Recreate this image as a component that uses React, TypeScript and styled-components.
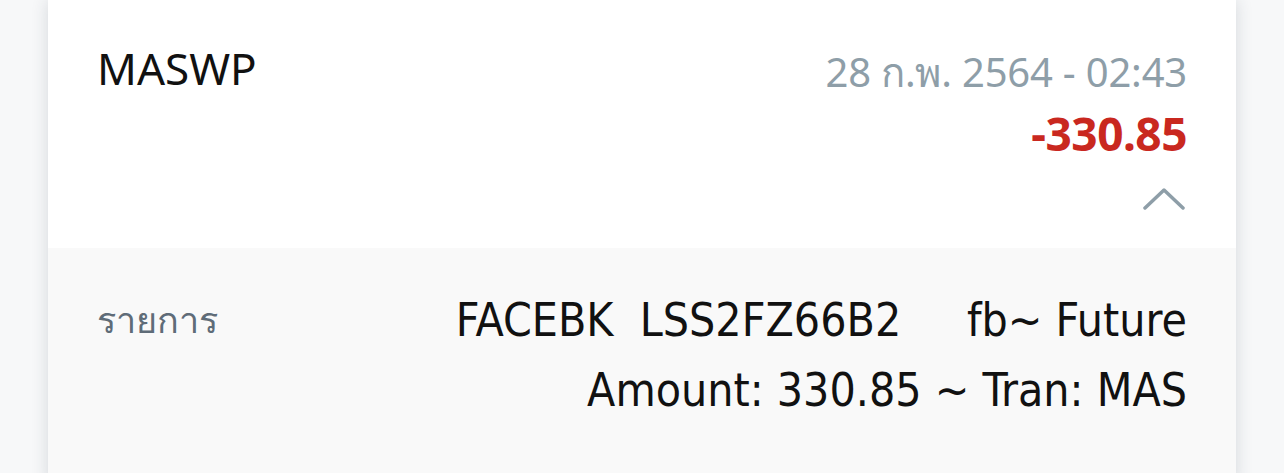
import styled, { createGlobalStyle } from "styled-components";
import React from "react";

const Global = createGlobalStyle`
  html, body {
    margin: 0;
    padding: 0;
    background: #f7f8f9;
    font-family: "Noto Sans", "DejaVu Sans", sans-serif;
  }
`;

const Page = styled.div`
  height: 473px;
  overflow: hidden;
  padding: 0 48px;
`;

const Card = styled.div`
  background: #ffffff;
  box-shadow: 0 0 16px rgba(40, 50, 70, 0.16);
  min-height: 473px;
`;

const Header = styled.div`
  display: flex;
  justify-content: space-between;
  align-items: flex-start;
  height: 248px;
  box-sizing: border-box;
  padding: 40px 49px 0 49px;
  background: #ffffff;
`;

const Title = styled.div`
  font-size: 44px;
  color: #111111;
  line-height: 56px;
`;

const RightCol = styled.div`
  display: flex;
  flex-direction: column;
  align-items: flex-end;
`;

const DateText = styled.div`
  font-size: 40px;
  color: #8e9ea8;
  line-height: 64px;
  letter-spacing: -0.2px;
`;

const Amount = styled.div`
  font-size: 46px;
  font-weight: 700;
  color: #c9281f;
  line-height: 58px;
  letter-spacing: -0.5px;
`;

const Chevron = styled.svg`
  margin-top: 24px;
  margin-right: 2px;
`;

const Detail = styled.div`
  display: flex;
  justify-content: space-between;
  align-items: flex-start;
  background: #f9f9f9;
  padding: 37px 49px 60px 49px;
`;

const Label = styled.div`
  font-size: 36px;
  color: #5f6c78;
  line-height: 70px;
`;

const Value = styled.div`
  font-family: "DejaVu Sans Condensed", "DejaVu Sans", sans-serif;
  font-stretch: condensed;
  font-size: 46px;
  color: #111111;
  line-height: 70px;
  text-align: right;
  white-space: pre;
`;

export default function App() {
    return (
        <Page>
            <Global />
            <Card>
                <Header>
                    <Title>MASWP</Title>
                    <RightCol>
                        <DateText>28 ก.พ. 2564 - 02:43</DateText>
                        <Amount>-330.85</Amount>
                        <Chevron width="42" height="24" viewBox="0 0 42 24">
                            <path d="M2 22 L21 4 L40 22" fill="none" stroke="#8e9ea8" strokeWidth="3.5" strokeLinecap="round" strokeLinejoin="round" />
                        </Chevron>
                    </RightCol>
                </Header>
                <Detail>
                    <Label>รายการ</Label>
                    <Value>
                        {"FACEBK  LSS2FZ66B2     fb~ Future"}
                        <br />
                        {"Amount: 330.85 ~ Tran: MAS"}
                    </Value>
                </Detail>
            </Card>
        </Page>
    );
}
